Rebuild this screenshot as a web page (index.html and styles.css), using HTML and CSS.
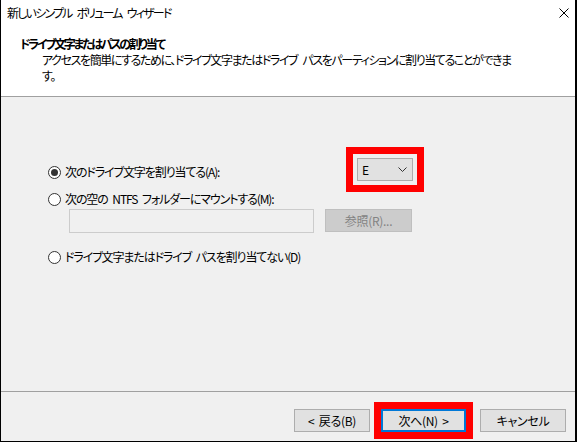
FILE: index.html
```html
<!DOCTYPE html>
<html lang="ja">
<head>
    <meta charset="UTF-8">
    <title>新しいシンプル ボリューム ウィザード</title>
    <link rel="stylesheet" href="styles.css">
</head>
<body>
    <div class="wizard">
        <div class="titlebar">
            <span class="title">新しいシンプル ボリューム ウィザード</span>
            <svg class="close" width="10" height="10" viewBox="0 0 10 10">
                <path d="M0.5 0.5 L9.5 9.5 M9.5 0.5 L0.5 9.5" stroke="#000" stroke-width="1" fill="none"/>
            </svg>
        </div>
        <div class="header">
            <h1>ドライブ文字またはパスの割り当て</h1>
            <p>アクセスを簡単にするために、ドライブ文字またはドライブ パスをパーティションに割り当てることができま<br>す。</p>
        </div>
        <div class="content">
            <div class="row row-letter">
                <label class="choice"><span class="radio checked"></span>次のドライブ文字を割り当てる(A):</label>
                <div class="combo highlight">
                    <span>E</span>
                    <svg width="9" height="5" viewBox="0 0 9 5">
                        <path d="M0.5 0.5 L4.5 4.5 L8.5 0.5" stroke="#333" stroke-width="1" fill="none"/>
                    </svg>
                </div>
            </div>
            <label class="choice row-mount"><span class="radio"></span>次の空の NTFS フォルダーにマウントする(M):</label>
            <div class="mount-path">
                <div class="textbox"></div>
                <div class="btn disabled">参照(R)...</div>
            </div>
            <label class="choice row-none"><span class="radio"></span>ドライブ文字またはドライブ パスを割り当てない(D)</label>
        </div>
        <div class="footer">
            <div class="btn back">&lt; 戻る(B)</div>
            <div class="btn next default highlight">次へ(N) &gt;</div>
            <div class="btn cancel">キャンセル</div>
        </div>
    </div>
</body>
</html>
```

FILE: styles.css
```css
html, body { margin: 0; padding: 0; }
body { font-family: "Noto Sans CJK JP", "Noto Sans", sans-serif; font-size: 12px; color: #000; font-feature-settings: "palt"; }
.wizard { width: 574px; height: 441px; border-left: 1px solid #000; border-right: 2px solid #000; border-bottom: 1px solid #000; background: #f0f0f0; display: flex; flex-direction: column; }

/* title bar + white header */
.titlebar { height: 26px; background: #fff; display: flex; align-items: center; padding: 0 6px; }
.title { line-height: 16px; flex: 1; margin-top: -1px; letter-spacing: -1.8px; word-spacing: 4px; }
.close { margin-right: 0; }
.header { height: 70px; background: #fff; border-bottom: 1px solid #a0a0a0; }
.header h1 { margin: 10px 0 0 19px; font-size: 12px; font-weight: bold; line-height: 16px; letter-spacing: -2.3px; }
.header p { margin: 0 0 0 41px; line-height: 16px; letter-spacing: -1.4px; word-spacing: 4px; white-space: nowrap; }

/* options */
.content { flex: 1; padding: 61px 0 0 47px; border-bottom: 1px solid #a0a0a0; }
.choice { display: flex; align-items: center; line-height: 16px; letter-spacing: -1.1px; word-spacing: 3px; white-space: nowrap; }
.radio { width: 11px; height: 11px; border: 1px solid #333; border-radius: 50%; background: #fff; margin-right: 4px; position: relative; flex: none; }
.radio.checked::after { content: ""; position: absolute; left: 2px; top: 2px; width: 7px; height: 7px; border-radius: 50%; background: #333; }
.row-letter { display: grid; grid-template-columns: 309px 56px; align-items: start; }
.row-letter .choice { padding-top: 6px; }
.combo { height: 21px; border: 1px solid #adadad; background: #e1e1e1; display: flex; align-items: center; justify-content: space-between; padding: 0 5px 0 4px; }
.highlight { outline: 7px solid #ff0000; outline-offset: 4px; }
.row-mount { margin-top: 10px; }
.mount-path { display: flex; gap: 11px; margin: 2px 0 0 21px; }
.textbox { width: 243px; height: 22px; border: 1px solid #cccccc; background: #f0f0f0; }
.row-none { margin-top: 16px; }

/* buttons */
.btn { height: 21px; border: 1px solid #adadad; background: #e1e1e1; display: flex; align-items: center; justify-content: center; line-height: 16px; box-sizing: content-box; letter-spacing: -0.3px; word-spacing: 2px; }
.btn.disabled { width: 85px; background: #cccccc; border-color: #bfbfbf; color: #838383; }
.footer { height: 49px; display: flex; justify-content: flex-end; padding: 17px 9px 0 0; box-sizing: border-box; }
.back { width: 74px; }
.next { width: 81px; margin-left: 11px; border: 2px solid #0078d7; height: 19px; }
.next.highlight { outline-offset: 0; }
.cancel { width: 84px; margin-left: 14px; }
```
